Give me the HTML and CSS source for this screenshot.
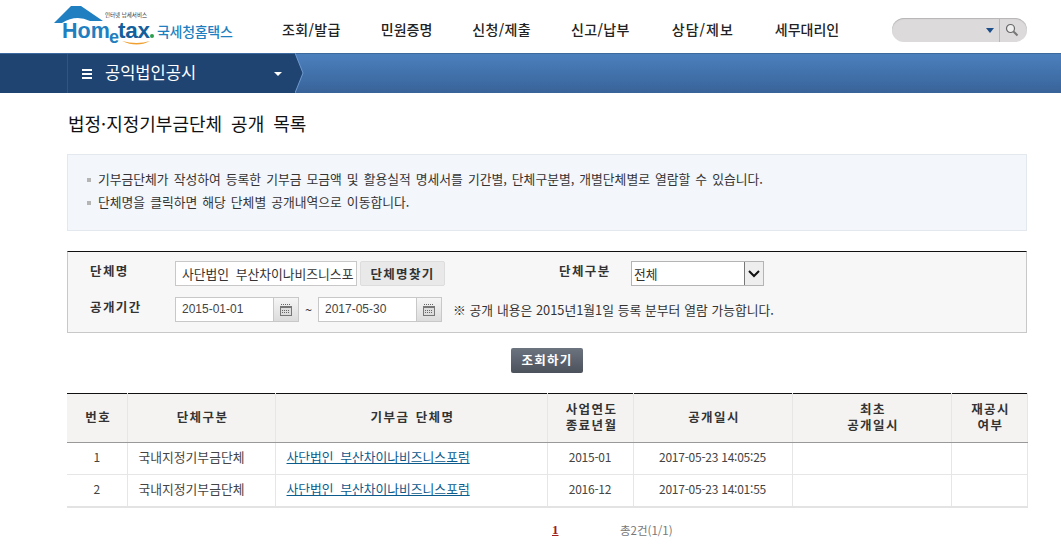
FILE: index.html
```html
<!DOCTYPE html>
<html lang="ko">
<head>
<meta charset="utf-8">
<title>법정·지정기부금단체 공개 목록</title>
<link rel="stylesheet" href="styles.css">
</head>
<body>
<header class="top">
  <a class="logo" href="#">
    <svg class="logo-art" width="185" height="50" viewBox="0 0 185 50">
      <path d="M1 20 L18 3 H28 L50 18 H37 Q23 11 9 20 Z" fill="#1f7fc0"/>
      <path d="M69 38 Q84 45 97 38 Q84 42 69 38 Z" fill="#f0a030"/>
      <circle cx="99" cy="33" r="2" fill="#2e9e4a"/>
      <text x="52" y="14" class="logo-small">인터넷 납세서비스</text>
      <text x="9" y="35" class="logo-home">Hom</text>
      <text x="56" y="40" class="logo-e">e</text>
      <text x="65" y="35" class="logo-tax">tax</text>
      <text x="104" y="34" class="logo-kr">국세청홈택스</text>
    </svg>
  </a>
  <nav class="gnb">
    <a href="#">조회/발급</a>
    <a class="plain" href="#">민원증명</a>
    <a href="#">신청/제출</a>
    <a href="#">신고/납부</a>
    <a class="wide" href="#">상담/제보</a>
    <a class="plain last" href="#">세무대리인</a>
  </nav>
  <div class="search">
    <span class="search-field"><i class="caret"></i></span>
    <span class="search-btn">
      <svg width="14" height="14" viewBox="0 0 14 14"><circle cx="5.5" cy="5.5" r="4" fill="#eee" stroke="#666" stroke-width="1.2"/><path d="M8.5 8.5 L12.5 12.5" stroke="#777" stroke-width="2"/></svg>
    </span>
  </div>
</header>

<div class="bar">
  <div class="bar-dark">
    <div class="crumb">
      <span class="burger"><i></i><i></i><i></i></span>
      <span class="crumb-text">공익법인공시</span>
      <i class="crumb-caret"></i>
    </div>
    <svg class="chevron" width="10" height="40" viewBox="0 0 10 40"><path d="M0 0 L8 20 L0 40 Z" fill="#204471"/><path d="M0 0 L8 20 L0 40" fill="none" stroke="#6f9ad0" stroke-width="1"/></svg>
  </div>
</div>

<main class="content">
  <h1 class="title">법정·지정기부금단체 공개 목록</h1>

  <ul class="info">
    <li>기부금단체가 작성하여 등록한 기부금 모금액 및 활용실적 명세서를 기간별, 단체구분별, 개별단체별로 열람할 수 있습니다.</li>
    <li>단체명을 클릭하면 해당 단체별 공개내역으로 이동합니다.</li>
  </ul>

  <section class="filter">
    <div class="frow">
      <label class="flabel">단체명</label>
      <input class="name-input" type="text" value="사단법인 부산차이나비즈니스포럼">
      <button class="find-btn" type="button">단체명찾기</button>
      <label class="flabel flabel-type">단체구분</label>
      <span class="select"><span class="select-text">전체</span><span class="select-arrow"><svg width="12" height="8" viewBox="0 0 12 8"><path d="M1 1 L6 6 L11 1" fill="none" stroke="#111" stroke-width="2"/></svg></span></span>
    </div>
    <div class="frow">
      <label class="flabel">공개기간</label>
      <span class="date"><span class="date-text">2015-01-01</span><span class="cal"><svg width="12" height="12" viewBox="0 0 12 12"><path d="M1 .5 H11" stroke="#666" stroke-dasharray="1 1"/><rect x=".5" y="2.5" width="11" height="9" fill="#ddd" stroke="#777"/><path d="M1 3.5 H11" stroke="#777"/><path d="M2 6.5 H10 M2 8.5 H10" stroke="#666" stroke-dasharray="1 1"/></svg></span></span>
      <span class="tilde">~</span>
      <span class="date"><span class="date-text">2017-05-30</span><span class="cal"><svg width="12" height="12" viewBox="0 0 12 12"><path d="M1 .5 H11" stroke="#666" stroke-dasharray="1 1"/><rect x=".5" y="2.5" width="11" height="9" fill="#ddd" stroke="#777"/><path d="M1 3.5 H11" stroke="#777"/><path d="M2 6.5 H10 M2 8.5 H10" stroke="#666" stroke-dasharray="1 1"/></svg></span></span>
      <span class="note">※ 공개 내용은 2015년1월1일 등록 분부터 열람 가능합니다.</span>
    </div>
  </section>

  <div class="actions"><button class="query-btn" type="button">조회하기</button></div>

  <table class="grid">
    <colgroup>
      <col class="c1"><col class="c2"><col class="c3"><col class="c4"><col class="c5"><col class="c6"><col class="c7">
    </colgroup>
    <thead>
      <tr>
        <th>번호</th><th>단체구분</th><th>기부금 단체명</th><th>사업연도<br>종료년월</th><th>공개일시</th><th>최초<br>공개일시</th><th>재공시<br>여부</th>
      </tr>
    </thead>
    <tbody>
      <tr>
        <td class="num">1</td><td class="left">국내지정기부금단체</td><td class="left"><a href="#">사단법인 부산차이나비즈니스포럼</a></td><td class="num">2015-01</td><td class="num">2017-05-23 14:05:25</td><td></td><td></td>
      </tr>
      <tr>
        <td class="num">2</td><td class="left">국내지정기부금단체</td><td class="left"><a href="#">사단법인 부산차이나비즈니스포럼</a></td><td class="num">2016-12</td><td class="num">2017-05-23 14:01:55</td><td></td><td></td>
      </tr>
    </tbody>
  </table>

  <div class="pager"><a class="page" href="#">1</a><span class="total">총2건(1/1)</span></div>
</main>
</body>
</html>
```
FILE: styles.css
```css
* { box-sizing: border-box; }
html, body { margin: 0; padding: 0; }
body {
  width: 1061px;
  height: 558px;
  overflow: hidden;
  background: #fff;
  color: #333;
  font-family: "Noto Sans CJK KR", "Liberation Sans", sans-serif;
  font-size: 12.8px;
}
a { color: inherit; text-decoration: none; }

.top { display: flex; align-items: flex-start; height: 53px; padding-left: 53px; }
.logo { display: block; width: 185px; height: 50px; margin-top: 3px; }
.logo-art { display: block; }
.logo-small { font-size: 5.5px; fill: #333; }
.logo-home { font-family: "Liberation Sans", sans-serif; font-size: 21.5px; font-weight: 700; fill: #1f7fc0; }
.logo-e { font-family: "Liberation Sans", sans-serif; font-size: 18px; font-weight: 700; fill: #1f7fc0; }
.logo-tax { font-family: "Liberation Sans", sans-serif; font-size: 22.5px; font-weight: 700; fill: #14609c; letter-spacing: -.3px; }
.logo-kr { font-size: 14px; font-weight: 500; fill: #1f7fc0; letter-spacing: -.3px; }

.gnb { display: flex; gap: 40px; margin-left: 44px; height: 53px; padding-top: 19px; }
.gnb a { font-size: 14px; font-weight: 500; color: #222; line-height: 20px; white-space: nowrap; letter-spacing: .35px; }
.gnb a.plain { letter-spacing: 0; }
.gnb a.wide { letter-spacing: 1px; margin-left: 2px; }
.gnb a.last { margin-left: 1px; }

.search { display: flex; width: 135px; height: 24px; margin: 18px 34px 0 auto; background: #dcdada; border-radius: 12px; box-shadow: inset 0 1px 1px #b5b3b3; }
.search-field { position: relative; flex: 1; border-right: 1px solid #b9b7b7; }
.caret { position: absolute; right: 5px; top: 10px; border: 4px solid transparent; border-top: 5px solid #1c4e8a; border-bottom: 0; }
.search-btn { width: 27px; display: flex; align-items: center; justify-content: center; padding-right: 3px; }

.bar { height: 40px; background: linear-gradient(#4c80bd, #386399); border-top: 1px solid #3c6a9f; }
.bar-dark { position: relative; width: 295px; height: 39px; background: #204471; padding-left: 67px; }
.chevron { position: absolute; left: 295px; top: -1px; }
.crumb { display: flex; align-items: center; height: 39px; border-left: 1px solid #2e5583; padding: 0 0 4px 14px; color: #fff; }
.burger { display: flex; flex-direction: column; gap: 2px; width: 10px; margin: 4px 13px 0 0; }
.burger i { display: block; height: 2px; background: #fff; }
.crumb-text { font-size: 16.5px; line-height: 20px; }
.crumb-caret { margin: 4px 0 0 78px; border: 4px solid transparent; border-top: 4px solid #fff; border-bottom: 0; }

.content { width: 960px; margin-left: 67px; }
.title { margin: 0; padding: 18px 0 0 1px; height: 61px; font-size: 18px; line-height: 24px; font-weight: 400; color: #111; word-spacing: 4px; }

.info { margin: 0; padding: 12px 0 0 19px; list-style: none; height: 77px; background: #f3f6fb; border: 1px solid #e3e8ee; }
.info li { position: relative; padding-left: 11px; font-size: 12.8px; line-height: 23px; color: #333; word-spacing: 1.45px; white-space: nowrap; }
.info li::before { content: ""; position: absolute; left: 0; top: 11px; width: 4px; height: 4px; background: #b5b5b5; }

.filter { margin-top: 20px; height: 82px; background: #f7f7f7; border: 1px solid #c8c8c8; border-top-color: #111; padding: 9px 0 0 22px; }
.frow { display: flex; align-items: center; height: 25px; margin-bottom: 11px; }
.flabel { width: 85px; margin-top: -5px; font-size: 12.5px; font-weight: 700; color: #333; line-height: 20px; letter-spacing: 1.4px; white-space: nowrap; }
.name-input { width: 182px; height: 25px; padding: 0 2px 0 6px; border: 1px solid #c8c8c8; background: #fff; font: 12.8px "Noto Sans CJK KR", sans-serif; color: #333; word-spacing: 3px; }
.find-btn { width: 85px; height: 25px; margin-left: 3px; padding: 0; border: 1px solid #ddd; border-radius: 2px; background: #e9e9e9; font: 700 12.5px "Noto Sans CJK KR", sans-serif; letter-spacing: 1.3px; color: #333; }
.flabel-type { margin-left: 114px; width: 72px; }
.select { display: flex; width: 133px; height: 25px; border: 1px solid #b4b4b4; background: #fff; }
.select-text { flex: 1; padding-left: 2px; line-height: 23px; color: #333; }
.select-arrow { width: 19px; display: flex; align-items: center; justify-content: center; background: #eee; border-left: 1px solid #777; }

.date { display: flex; width: 124px; height: 25px; border: 1px solid #c8c8c8; background: #fff; }
.date-text { flex: 1; padding-left: 6px; font-size: 12px; line-height: 23px; color: #444; font-family: "Liberation Sans", sans-serif; }
.cal { width: 25px; display: flex; align-items: center; justify-content: center; background: linear-gradient(#f5f5f5, #dcdcdc); border-left: 1px solid #c8c8c8; }
.tilde { width: 19px; text-align: center; color: #333; }
.note { margin-left: 11px; color: #333; line-height: 20px; word-spacing: .2px; white-space: nowrap; }

.actions { display: flex; justify-content: center; padding-top: 15px; height: 60px; }
.query-btn { width: 72px; height: 25px; padding: 0 0 2px; border: 0; border-radius: 2px; background: linear-gradient(#6c7480, #4c525c); color: #fff; font: 700 12.5px "Noto Sans CJK KR", sans-serif; letter-spacing: 1.3px; }

.grid { width: 960px; border-collapse: collapse; table-layout: fixed; border-top: 1px solid #111; border-bottom: 2px solid #e3e3e3; }
.c1 { width: 60px; } .c2 { width: 148px; } .c3 { width: 272px; } .c4 { width: 86px; }
.c5 { width: 159px; } .c6 { width: 159px; } .c7 { width: 76px; }
.grid th { height: 49px; padding: 0 0 2px 3px; background: #f4f3f2; border-left: 1px solid #e6e6e6; border-right: 1px solid #e6e6e6; border-bottom: 1px solid #999; font-size: 12.5px; font-weight: 700; line-height: 16px; color: #333; letter-spacing: 1.4px; word-spacing: 1.5px; }
.grid td { height: 32px; padding: 0 0 3px; text-align: center; border-left: 1px solid #e6e6e6; border-right: 1px solid #e6e6e6; border-bottom: 1px solid #e6e6e6; line-height: 16px; color: #444; }
.grid th:first-child, .grid td:first-child { border-left: 0; }
.grid td.left { text-align: left; padding-left: 11px; word-spacing: 3px; }
.grid td.num { font-size: 12px; letter-spacing: -.25px; }
.grid td a { color: #0b5b8c; text-decoration: underline; }

.pager { height: 40px; padding-top: 4px; padding-left: 485px; display: flex; align-items: center; line-height: 16px; }
.page { width: 68px; color: #a01c1c; font: 700 13px "Liberation Serif", serif; text-decoration: underline; }
.total { font-size: 11.5px; color: #777; }
```
